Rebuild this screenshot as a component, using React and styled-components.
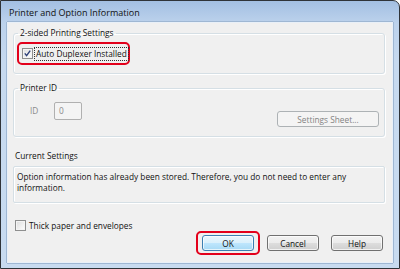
import React from "react";
import styled, { createGlobalStyle } from "styled-components";

const GlobalStyle = createGlobalStyle`
    html, body {
        margin: 0;
        padding: 0;
        background: #ffffff;
    }
    * {
        box-sizing: border-box;
    }
`

function Check({ checked }) {
    return (
        <CheckBox>
            {checked && (
                <svg width="9" height="9" viewBox="0 0 9 9">
                    <path d="M1.8 4.4 L3.6 6.6 L7.2 1.6" fill="none" stroke="#2d3f78" strokeWidth="1.4" />
                </svg>
            )}
        </CheckBox>
    )
}

function App() {
    return (
        <>
            <GlobalStyle />
            <Window>
                <TitleBar>Printer and Option Information</TitleBar>
                <Client>
                    <Group $top={4}>
                        <Legend>2-sided Printing Settings</Legend>
                        <RedRing>
                            <Check checked />
                            <FocusLabel>Auto Duplexer Installed</FocusLabel>
                        </RedRing>
                    </Group>
                    <Group $top={8}>
                        <Legend>Printer ID</Legend>
                        <IdRow>
                            <IdLabel>ID</IdLabel>
                            <IdInput>0</IdInput>
                            <Button $disabled $width={102}>Settings Sheet...</Button>
                        </IdRow>
                    </Group>
                    <Caption>Current Settings</Caption>
                    <InfoBox>
                        Option information has already been stored. Therefore, you do not need to enter any information.
                    </InfoBox>
                    <CheckRow>
                        <Check />
                        <span>Thick paper and envelopes</span>
                    </CheckRow>
                    <ButtonRow>
                        <OkRing>
                            <Button $primary $width={52}>OK</Button>
                        </OkRing>
                        <Button $width={52} $gap={7}>Cancel</Button>
                        <Button $width={52} $gap={12}>Help</Button>
                    </ButtonRow>
                </Client>
            </Window>
        </>
    )
}

export default App

const Window = styled.div`
    width: 400px;
    height: 269px;
    display: flex;
    flex-direction: column;
    border: 1px solid #2f3338;
    border-top-right-radius: 7px;
    background: linear-gradient(to bottom, #a3bfe2 0px, #bcd2ec 22px, #c6d9ef 60px, #c8dbf0 100%);
    padding: 0 6px 5px 6px;
    font-family: "Open Sans", "Noto Sans", sans-serif;
    font-size: 8.3px;
    color: #111111;
    white-space: nowrap;
    overflow: hidden;
`

const TitleBar = styled.div`
    height: 21px;
    display: flex;
    align-items: center;
    padding: 1px 0 0 2px;
    font-size: 9px;
    color: #101010;
`

const Client = styled.div`
    flex: 1;
    display: flex;
    flex-direction: column;
    background: #f0f0f0;
    border: 1px solid #e9f0f8;
    box-shadow: -1px 0 0 #9fb7d3, 1px 0 0 #9fb7d3, 0 1px 0 #9fb7d3, 0 -1px 0 #9fb7d3;
`

const Group = styled.fieldset`
    margin: ${(p) => p.$top}px 7px 0 5px;
    padding: 0;
    min-width: 0;
    border: 1px solid #d5dfe5;
    border-radius: 3px;
    box-shadow: inset 1px 1px 0 #ffffff, 1px 1px 0 #ffffff;
`

const Legend = styled.legend`
    margin-left: 4px;
    padding: 0 2px;
    line-height: 12px;
    height: 12px;
`

const RedRing = styled.div`
    width: 113px;
    height: 23px;
    margin: 3px 0 8px 3px;
    display: flex;
    align-items: center;
    gap: 2px;
    padding-left: 3px;
    border: 2px solid #e3001b;
    border-radius: 5px;
`

const CheckBox = styled.span`
    width: 11px;
    height: 11px;
    flex-shrink: 0;
    display: flex;
    align-items: center;
    justify-content: center;
    border: 1px solid #8e8f8f;
    background: linear-gradient(135deg, #dcdcdc, #ffffff);
    box-shadow: inset 0 0 0 1px #f4f4f4;
`

const FocusLabel = styled.span`
    padding: 0 1px;
    line-height: 12px;
    outline: 1px dotted #333333;
`

const IdRow = styled.div`
    height: 25px;
    display: flex;
    align-items: flex-start;
    margin: 8px 5px 9px 16px;
`

const IdLabel = styled.span`
    width: 24px;
    line-height: 18px;
    color: #8a8a8a;
`

const IdInput = styled.div`
    width: 28px;
    height: 18px;
    padding-left: 4px;
    line-height: 16px;
    border: 1px solid #b0b0b0;
    border-radius: 2px;
    background: #f4f4f4;
    color: #8a8a8a;
`

const Button = styled.div`
    width: ${(p) => p.$width}px;
    height: 16px;
    margin-left: ${(p) => p.$gap || 0}px;
    display: flex;
    align-items: center;
    justify-content: center;
    flex-shrink: 0;
    border-radius: 3px;
    border: 1px solid ${(p) => (p.$disabled ? "#adb2b5" : p.$primary ? "#3c7fb1" : "#707070")};
    background: ${(p) =>
        p.$disabled
            ? "#f4f4f4"
            : p.$primary
            ? "linear-gradient(to bottom, #eaf6fd 0%, #d9f0fc 50%, #bee6fd 51%, #a7d9f5 100%)"
            : "linear-gradient(to bottom, #f2f2f2 0%, #ebebeb 50%, #dddddd 51%, #cfcfcf 100%)"};
    box-shadow: inset 0 0 0 1px ${(p) => (p.$disabled ? "#f4f4f4" : "rgba(255,255,255,0.7)")};
    color: ${(p) => (p.$disabled ? "#838383" : "#111111")};
    ${(p) => p.$disabled && "margin-left: auto; align-self: flex-end;"}
`

const Caption = styled.div`
    margin: 13px 0 0 7px;
    line-height: 12px;
`

const InfoBox = styled.div`
    height: 37px;
    margin: 4px 7px 0 5px;
    padding: 4px 3px 0 3px;
    line-height: 11px;
    white-space: normal;
    border: 1px solid #d5dfe5;
    border-radius: 2px;
    box-shadow: inset 1px 1px 0 #ffffff, 1px 1px 0 #ffffff;
`

const CheckRow = styled.div`
    height: 11px;
    margin: 17px 0 0 7px;
    display: flex;
    align-items: center;
    gap: 3px;
    line-height: 11px;
`

const ButtonRow = styled.div`
    display: flex;
    align-items: center;
    justify-content: flex-end;
    padding-right: 9px;
`

const OkRing = styled.div`
    padding: 2px 4px;
    border: 2px solid #e3001b;
    border-radius: 5px;
`
